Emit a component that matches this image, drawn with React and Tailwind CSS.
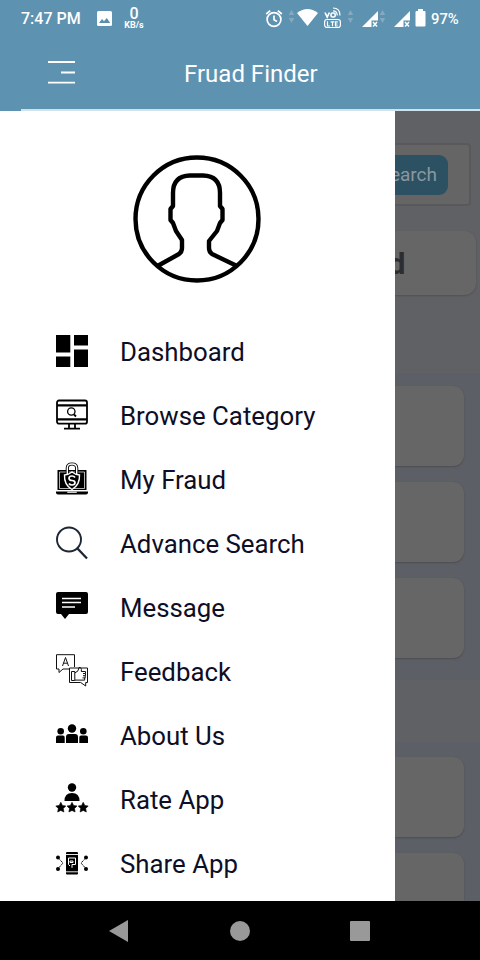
import React from 'react';

const TrafficArrows = ({ className }) => (
  <svg className={className} width="7" height="16" viewBox="0 0 7 16" fill="#86a9bf">
    <path d="M3.5 1 6.3 6H.7zM3.5 14 .7 9h5.6z" />
  </svg>
);

const SignalIcon = ({ className }) => (
  <svg className={className} width="17" height="17" viewBox="0 0 17 17">
    <path d="M0 16 16 0v9.5H9.5V16z" fill="#fff" />
    <path d="m11 11 4 4.5m0-4.5-4 4.5" stroke="#fff" strokeWidth="1.5" />
  </svg>
);

const StatusBar = () => (
  <div className="flex h-9 items-start text-white">
    <span className="ml-[21px] mt-[7px] w-[60px] text-[16px] leading-6 font-medium whitespace-nowrap">7:47 PM</span>
    <svg className="mt-[11px] ml-4 shrink-0" width="15" height="15" viewBox="0 0 15 15">
      <rect width="15" height="15" rx="1.5" fill="#fff" />
      <path d="m2 12 3-4 2 2.3L9.8 7l3.4 5z" fill="#5d8fad" />
    </svg>
    <div className="mt-[6px] ml-[9px] w-[26px] text-center">
      <div className="text-[16px] leading-[15px] font-medium">0</div>
      <div className="text-[9px] leading-[9px] font-bold">KB/s</div>
    </div>
    <svg className="mt-[9px] ml-[117px] shrink-0" width="20" height="19" viewBox="0 0 20 19" fill="none" stroke="#fff" strokeWidth="1.7">
      <circle cx="10" cy="10.5" r="6.9" />
      <path d="M10 6.5v4.2l3 1.8M2.2 5l4-3.4M17.8 5l-4-3.4" />
    </svg>
    <TrafficArrows className="mt-[9px] ml-[4px] shrink-0" />
    <svg className="mt-[9px] ml-[2px] shrink-0" width="21" height="17" viewBox="0 0 21 17">
      <path d="M0 4Q10.5-4 21 4L10.5 17z" fill="#fff" />
    </svg>
    <svg className="mt-[7px] ml-[5px] shrink-0" width="19" height="22" viewBox="0 0 19 22" fill="none" stroke="#fff" strokeWidth="1.2">
      <path d="m2 5.5 2.200 4.700L6.400 5.500" strokeWidth="1.6" />
      <rect x="8" y="6" width="4.2" height="4" rx="1.6" strokeWidth="1.6" />
      <path d="M10 3.8q4 0 4.3 4.7M10 1q7 0 7 7.5" />
      <rect x="1.6" y="12.5" width="15.8" height="8" rx="2.5" />
      <path d="M4.5 14.2V19H7M7.7 14.8h3.6M9.5 14.8V19.2M14.8 14.8h-2.3V19h2.3M12.5 17h2" />
    </svg>
    <TrafficArrows className="mt-[9px] ml-[5px] shrink-0" />
    <SignalIcon className="mt-[11px] ml-[8px] shrink-0" />
    <TrafficArrows className="mt-[9px] shrink-0" />
    <SignalIcon className="mt-[11px] ml-[8px] shrink-0" />
    <svg className="mt-[9px] ml-[4px] shrink-0" width="11" height="18" viewBox="0 0 11 18" fill="#fff">
      <path d="M3 0h5v2h1.5q1 0 1 1v13.5q0 1-1 1h-8q-1 0-1-1V3q0-1 1-1H3z" />
    </svg>
    <span className="mt-[7px] ml-[5px] text-[14.8px] leading-6 font-medium">97%</span>
  </div>
);

const Avatar = () => (
  <svg width="128" height="128" viewBox="0 0 128 128" fill="none" stroke="#000" strokeWidth="4.4">
    <circle cx="64" cy="64" r="61.5" />
    <path
      strokeLinejoin="round"
      d="M24.5 111 46 99q3-2 3-6v-8l-6-9-3-8-2.500-3V54l2.500-3V38q0-17 17-17.500h13Q87 21 87 38v13l2.500 3v11L87 68l-3 8-8 10v7q0 4 3 6l25 12"
    />
  </svg>
);

const DashboardIcon = () => (
  <svg width="32" height="32" viewBox="0 0 32 32">
    <path d="M0 0h14.3v17.5H0zM18 0h14v10.5H18zM0 21.5h14.3V32H0zM18 14.5h14V32H18z" />
  </svg>
);

const BrowseIcon = () => (
  <svg width="32" height="32" viewBox="0 0 32 32" fill="none" stroke="#000" strokeWidth="1.8">
    <rect x="1" y="1.5" width="30" height="23.2" rx="2" />
    <path d="M1 6.3h30M1 20.3h30" strokeWidth="2.3" />
    <path d="M13 25v4m6-4v4M8 29.7h16" />
    <circle cx="15.3" cy="12.500" r="3.7" strokeWidth="1.3" />
    <path d="m18 15.5 2 2" />
  </svg>
);

const FraudIcon = () => (
  <svg width="32" height="32" viewBox="0 0 32 32">
    <path d="M1.5 7h29v20h-29z" />
    <path d="M3.5 9h25v16.5h-25z" fill="none" stroke="#fff" strokeWidth=".7" />
    <path d="M11.3 12V5.2q0-4.200 4.700-4.200t4.700 4.200V12" fill="none" stroke="#000" strokeWidth="3.2" />
    <path d="M11.3 12V5.2q0-4.200 4.700-4.200t4.700 4.200V12" fill="none" stroke="#fff" strokeWidth="1.4" />
    <path d="M16 9q3 2.500 7.500 3 .5 10-7.500 14.500Q8 22 8.500 12q4.500-.5 7.500-3z" stroke="#fff" strokeWidth="1.4" />
    <path d="M19 14.5q-1-1.500-3-1.500-3 0-3 2.200t3 2.300 3 2.300T16 22q-2 0-3-1.500" fill="none" stroke="#fff" strokeWidth="1.7" />
    <path d="M0 28.5h32v1q0 2-2 2H2q-2 0-2-2z" />
    <path d="M11 28.5h10q0 1.500-1 1.500h-8q-1 0-1-1.500z" fill="#ccc" />
  </svg>
);

const SearchIcon = () => (
  <svg width="32" height="32" viewBox="0 0 32 32" fill="none" stroke="#1d2634">
    <circle cx="13" cy="12.5" r="12" strokeWidth="1.9" />
    <path d="m21.500 21.500 9.500 10" strokeWidth="2.3" />
  </svg>
);

const MessageIcon = () => (
  <svg width="32" height="32" viewBox="0 0 32 32">
    <path d="M2 1h28q2 0 2 2v18q0 2-2 2H13l-4 5-4-5H2q-2 0-2-2V3q0-2 2-2z" />
    <path d="M6 7.500h19M6 11.500h19M6 16h13" stroke="#fff" strokeWidth="1.7" />
  </svg>
);

const FeedbackIcon = () => (
  <svg width="32" height="32" viewBox="0 0 32 32" fill="none" stroke="#111" strokeWidth="1">
    <path d="M13.500 14H7l-4 3.500V14H.5V-.3h18V12" />
    <path d="m6.500 11 3-8.500 3 8.500M7.500 8.200h4" />
    <path d="M13.500 13h18v14.500h-1.800v3.500l-5-3.500H13.500z" />
    <path d="M15.500 16.500h3.300v9h-3.300zM18.800 18l3.200-2.200 1-3.300q3-.5 2.300 4h4.200v2H27m2.500 0v2.200H27m2.200 0v2.200h-2.700m2.200 0v2.200H19" />
  </svg>
);

const AboutIcon = () => (
  <svg width="32" height="32" viewBox="0 0 32 32">
    <circle cx="16" cy="9.500" r="4.200" />
    <circle cx="4.700" cy="12.300" r="3.300" />
    <circle cx="27.300" cy="12.300" r="3.300" />
    <path d="M10 24v-6q0-3 3-3h6q3 0 3 3v6zM0 24v-5.500q0-2 2-2h5q1.700 0 1.700 2V24zM23.300 24v-5.500q0-2 1.700-2h5q2 0 2 2V24z" />
  </svg>
);

const RateIcon = () => (
  <svg width="32" height="32" viewBox="0 0 32 32">
    <circle cx="16" cy="4.500" r="4.200" />
    <path d="M8.500 18q0-8 7.500-8t7.500 8z" />
    {[4.8, 16, 27.2].map((x) => (
      <path
        key={x}
        transform={`translate(${x} 24.3)`}
        d="m0-5 1.600 3.200 3.400.5L2.500 1.200 3.100 4.700 0 3.100-3.100 4.700-2.500 1.200-5-1.300l3.400-.5z"
        stroke="#000"
        strokeWidth=".6"
        strokeLinejoin="round"
      />
    ))}
  </svg>
);

const ShareIcon = () => (
  <svg width="32" height="32" viewBox="0 0 32 32">
    <rect x="10" y="5" width="12" height="22.500" rx="1" />
    <path d="M10 7.500h12M10 24.800h12" stroke="#fff" strokeWidth=".9" />
    <path d="M12.500 11h7v6.500h-3.500v3.300M12.500 11v6.500l1.500 1.500m0-5h3v1.500h-3z" fill="none" stroke="#fff" strokeWidth="1" />
    <path d="m2 10.800 5 5.200-5 5.700M30 10.800 25 16l5 5.700" fill="none" stroke="#111" strokeWidth="1" strokeDasharray="1.6 .6" />
    <circle cx="2" cy="10.500" r="2" />
    <circle cx="2" cy="22" r="2" />
    <circle cx="30" cy="10.500" r="2" />
    <circle cx="30" cy="22" r="2" />
  </svg>
);

const menuItems = [
  { label: 'Dashboard', icon: DashboardIcon },
  { label: 'Browse Category', icon: BrowseIcon },
  { label: 'My Fraud', icon: FraudIcon },
  { label: 'Advance Search', icon: SearchIcon },
  { label: 'Message', icon: MessageIcon },
  { label: 'Feedback', icon: FeedbackIcon },
  { label: 'About Us', icon: AboutIcon },
  { label: 'Rate App', icon: RateIcon },
  { label: 'Share App', icon: ShareIcon },
];

const Drawer = () => (
  <aside className="flex w-[394.5px] shrink-0 flex-col bg-white">
    <div className="flex justify-center pt-11">
      <Avatar />
    </div>
    <nav className="mt-[37px]">
      {menuItems.map(({ label, icon: Icon }) => (
        <a key={label} className="flex h-16 items-center gap-8 pl-14 text-[25.8px] text-[#0e0e26]">
          <span className="-mt-0.5 shrink-0 [&>svg]:block [&>svg]:overflow-visible">
            <Icon />
          </span>
          {label}
        </a>
      ))}
    </nav>
  </aside>
);

const ListCard = () => (
  <div className="mr-4 h-20 shrink-0 rounded-r-[11px] bg-[#666] shadow-[0_1px_2px_#4c4d52]" />
);

// Page behind the drawer, already dimmed
const DimmedPage = () => (
  <div className="flex flex-1 flex-col overflow-hidden bg-[#606165]">
    <div className="mt-[32px] mr-[9px] h-[63px] shrink-0 rounded-r-[4px] border-2 border-l-0 border-[#59595c] bg-[#656565] pt-[10px]">
      <div className="mr-[21px] flex h-10 items-center justify-end rounded-r-[9px] bg-[#2c5163] pr-[11px] text-[19px] text-[#8b979e]">
        Search
      </div>
    </div>
    <div className="mt-[25px] mr-1 flex h-16 shrink-0 items-center rounded-r-xl bg-[#666] shadow-[0_1px_2px_#505155]">
      <div className="flex w-[11px] justify-end overflow-hidden text-[30px] font-bold text-[#2c2d30]">
        <span>d</span>
      </div>
    </div>
    <div className="mt-[78px] flex shrink-0 flex-col gap-4 bg-[#5c5f65] pt-[13px] pb-[22px]">
      <ListCard />
      <ListCard />
      <ListCard />
    </div>
    <div className="mt-[62px] flex flex-col gap-4 bg-[#5c5f65] pt-[15px]">
      <ListCard />
      <ListCard />
    </div>
  </div>
);

const App = () => (
  <div className="flex h-[960px] w-[480px] flex-col overflow-hidden bg-black font-['Roboto',sans-serif]">
    <header className="flex h-[111px] shrink-0 flex-col bg-[#5e92b1]">
      <StatusBar />
      <div className="flex flex-1 items-start">
        <svg className="mt-6 ml-12 shrink-0" width="27" height="25" viewBox="0 0 27 25" stroke="#fff" strokeWidth="1.9">
          <path d="M0 2h27M13 12.500h14M0 22.600h27" />
        </svg>
        <h1 className="mt-[22px] ml-[109px] text-[24px] leading-8 whitespace-nowrap text-white">Fruad Finder</h1>
      </div>
      <div className="ml-[21px] h-[2px] bg-[#d3e2ea]" />
    </header>
    <main className="flex h-[790px] shrink-0 overflow-hidden">
      <Drawer />
      <DimmedPage />
    </main>
    <footer className="flex flex-1 items-center bg-black">
      <svg className="ml-[109px]" width="19" height="22" viewBox="0 0 19 22" fill="#999">
        <path d="M0 11 19 0v22z" />
      </svg>
      <div className="ml-[102px] size-5 rounded-full bg-[#999]" />
      <div className="ml-[100px] size-5 rounded-[1px] bg-[#999]" />
    </footer>
  </div>
);

export default App;
